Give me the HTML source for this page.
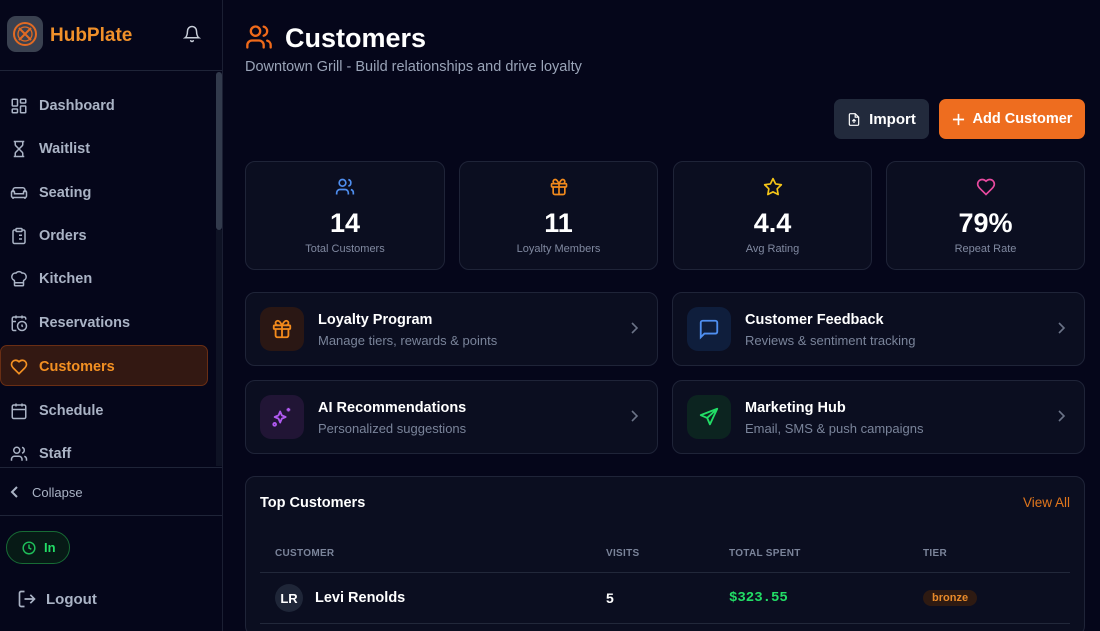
<!DOCTYPE html>
<html style="width:1100px;height:631px;overflow:hidden"><head><meta charset="utf-8"><style>
*{box-sizing:border-box;margin:0;padding:0}
body{width:1100px;height:631px;overflow:hidden;background:#05061a;font-family:"Liberation Sans",sans-serif;color:#fff;position:relative}
.sb{position:absolute;left:0;top:0;width:223px;height:631px;border-right:1px solid #1b1f33;background:#05061a}
.abs{position:absolute}
svg{display:block}
.nav{position:absolute;left:10px;display:flex;align-items:center;gap:11px;color:#aab3c5;font-size:14.5px;font-weight:bold}
.nav svg{width:18px;height:18px}
.card{position:absolute;background:#0b0e20;border:1px solid #1f2438;border-radius:10px}
.stat{text-align:center}
.stat .v{font-size:27px;font-weight:bold;position:absolute;left:0;right:0;top:46px}
.stat .l{font-size:11px;color:#8089a0;position:absolute;left:0;right:0;top:81px}
.stat svg{position:absolute;left:50%;margin-left:-10px;top:15px;width:20px;height:20px}
.lk .ib{position:absolute;left:14px;top:14px;width:44px;height:44px;border-radius:11px;display:flex;align-items:center;justify-content:center}
.lk .t{position:absolute;left:72px;top:19px;font-size:14.5px;font-weight:bold}
.lk .s{position:absolute;left:72px;top:40px;font-size:13px;color:#7a849a}
.lk .ch{position:absolute;right:18px;top:28px}
.th{position:absolute;top:71px;font-size:10px;font-weight:bold;color:#7b849a;letter-spacing:.3px}
</style></head><body>
<div class="sb">
 <div class="abs" style="left:7px;top:16px;width:36px;height:36px;border-radius:9px;background:#3a4150;display:flex;align-items:center;justify-content:center">
  <svg width="28" height="28" viewBox="0 0 28 28" fill="none" stroke="#e06a24" stroke-width="2"><circle cx="14" cy="14" r="11"/><circle cx="14" cy="14" r="7" stroke-width="1.3"/><path d="M8 8l12 12M20 8L8 20"/></svg>
 </div>
 <div class="abs" style="left:50px;top:25px;font-size:19px;font-weight:bold;color:#f0902a">HubPlate</div>
 <svg class="abs" style="left:183px;top:25px" width="18" height="18" viewBox="0 0 24 24" fill="none" stroke="#c8cdd8" stroke-width="2" stroke-linecap="round"><path d="M6 8a6 6 0 0112 0c0 7 3 9 3 9H3s3-2 3-9M10.3 21a1.9 1.9 0 003.4 0"/></svg>
 <div class="abs" style="left:0;top:70px;width:222px;border-top:1px solid #1f2438"></div>
 <div class="abs" style="left:216px;top:72px;width:6px;height:158px;border-radius:3px;background:#323a4c"></div>
 <div class="abs" style="left:216px;top:230px;width:6px;height:236px;background:#0e1224"></div>
 <div class="nav" style="top:97px"><svg viewBox="0 0 24 24" fill="none" stroke="#aab3c5" stroke-width="2"><rect x="3" y="3" width="7" height="9" rx="1"/><rect x="14" y="3" width="7" height="5" rx="1"/><rect x="14" y="12" width="7" height="9" rx="1"/><rect x="3" y="16" width="7" height="5" rx="1"/></svg>Dashboard</div>
 <div class="nav" style="top:140px"><svg viewBox="0 0 24 24" fill="none" stroke="#aab3c5" stroke-width="2"><path d="M5 22h14M5 2h14M17 22v-4.2a2 2 0 00-.6-1.4L12 12l-4.4 4.4a2 2 0 00-.6 1.4V22M7 2v4.2a2 2 0 00.6 1.4L12 12l4.4-4.4a2 2 0 00.6-1.4V2"/></svg>Waitlist</div>
 <div class="nav" style="top:184px"><svg viewBox="0 0 24 24" fill="none" stroke="#aab3c5" stroke-width="2"><path d="M4 11V8a3 3 0 013-3h10a3 3 0 013 3v3M2 16a2 2 0 002 2h16a2 2 0 002-2v-5a2 2 0 00-4 0v2H6v-2a2 2 0 00-4 0zM4 18v2M20 18v2"/></svg>Seating</div>
 <div class="nav" style="top:227px"><svg viewBox="0 0 24 24" fill="none" stroke="#aab3c5" stroke-width="2"><rect x="8" y="2" width="8" height="4" rx="1"/><path d="M16 4h2a2 2 0 012 2v14a2 2 0 01-2 2H6a2 2 0 01-2-2V6a2 2 0 012-2h2M12 11h4M12 16h4M8 11h.01M8 16h.01"/></svg>Orders</div>
 <div class="nav" style="top:270px"><svg viewBox="0 0 24 24" fill="none" stroke="#aab3c5" stroke-width="2"><path d="M17 21a1 1 0 001-1v-5.35c0-.46.3-.86.7-1.05a5 5 0 00-2.7-9.5 5 5 0 00-8 0 5 5 0 00-2.7 9.5c.4.2.7.6.7 1.05V20a1 1 0 001 1zM6 17h12"/></svg>Kitchen</div>
 <div class="nav" style="top:314px"><svg viewBox="0 0 24 24" fill="none" stroke="#aab3c5" stroke-width="2"><path d="M21 7.5V6a2 2 0 00-2-2H5a2 2 0 00-2 2v14a2 2 0 002 2h3.5M16 2v4M8 2v4M3 10h5"/><circle cx="16" cy="16" r="6"/><path d="M16 14v2l1 1"/></svg>Reservations</div>
 <div class="abs" style="left:0;top:345px;width:208px;height:41px;border-radius:7px;background:#331812;border:1px solid #6a2e14"></div>
 <div class="nav" style="top:358px;color:#f39022"><svg viewBox="0 0 24 24" fill="none" stroke="#f39022" stroke-width="2.2"><path d="M19 14c1.5-1.5 3-3.2 3-5.5A5.5 5.5 0 0016.5 3c-1.8 0-3 .5-4.5 2-1.5-1.5-2.7-2-4.5-2A5.5 5.5 0 002 8.5c0 2.3 1.5 4 3 5.5l7 7z"/></svg>Customers</div>
 <div class="nav" style="top:402px"><svg viewBox="0 0 24 24" fill="none" stroke="#aab3c5" stroke-width="2"><rect x="3" y="4" width="18" height="18" rx="2"/><path d="M16 2v4M8 2v4M3 10h18"/></svg>Schedule</div>
 <div class="nav" style="top:445px"><svg viewBox="0 0 24 24" fill="none" stroke="#aab3c5" stroke-width="2"><path d="M16 21v-2a4 4 0 00-4-4H6a4 4 0 00-4 4v2"/><circle cx="9" cy="7" r="4"/><path d="M22 21v-2a4 4 0 00-3-3.87M16 3.13a4 4 0 010 7.75"/></svg>Staff</div>
 <div class="abs" style="left:0;top:467px;width:222px;border-top:1px solid #1f2438;height:49px;border-bottom:1px solid #1f2438;background:#05061a"></div>
 <svg class="abs" style="left:9px;top:485px" width="12" height="14" viewBox="0 0 12 14" fill="none" stroke="#aab3c5" stroke-width="2"><path d="M8 2L3 7l5 5"/></svg>
 <div class="abs" style="left:32px;top:485px;font-size:13px;color:#aab3c5">Collapse</div>
 <div class="abs" style="left:6px;top:531px;width:64px;height:33px;border-radius:17px;background:#071a16;border:1.5px solid #176b35;display:flex;align-items:center;padding-left:15px;gap:8px;font-size:13px;font-weight:bold;color:#22dd66">
  <svg width="14" height="14" viewBox="0 0 24 24" fill="none" stroke="#1fbf5a" stroke-width="2.5"><circle cx="12" cy="12" r="10"/><path d="M12 6v6l4 2"/></svg>In</div>
 <svg class="abs" style="left:17px;top:589px" width="20" height="20" viewBox="0 0 24 24" fill="none" stroke="#aab3c5" stroke-width="2"><path d="M9 21H5a2 2 0 01-2-2V5a2 2 0 012-2h4M16 17l5-5-5-5M21 12H9"/></svg>
 <div class="abs" style="left:46px;top:591px;font-size:15px;font-weight:bold;color:#aab3c5">Logout</div>
</div>

<svg class="abs" style="left:245px;top:23px" width="28" height="28" viewBox="0 0 24 24" fill="none" stroke="#f06a1a" stroke-width="2" stroke-linecap="round"><path d="M16 21v-2a4 4 0 00-4-4H6a4 4 0 00-4 4v2"/><circle cx="9" cy="7" r="4"/><path d="M22 21v-2a4 4 0 00-3-3.87M16 3.13a4 4 0 010 7.75"/></svg>
<div class="abs" style="left:285px;top:23px;font-size:27px;font-weight:bold">Customers</div>
<div class="abs" style="left:245px;top:59px;font-size:14.5px;color:#9aa4b8">Downtown Grill - Build relationships and drive loyalty</div>

<div class="abs" style="left:834px;top:99px;width:95px;height:40px;border-radius:7px;background:#222a3c;display:flex;align-items:center;justify-content:center;gap:8px;font-size:15px;font-weight:bold">
 <svg width="14" height="15" viewBox="0 0 24 24" fill="none" stroke="#fff" stroke-width="2"><path d="M14 2H6a2 2 0 00-2 2v16a2 2 0 002 2h12a2 2 0 002-2V8zM14 2v6h6M12 18v-6M9 15l3-3 3 3"/></svg>Import</div>
<div class="abs" style="left:939px;top:99px;width:146px;height:40px;border-radius:7px;background:#ee6d1f;display:flex;align-items:center;justify-content:center;gap:8px;font-size:14.5px;font-weight:bold">
 <svg width="13" height="13" viewBox="0 0 14 14" fill="none" stroke="#fff" stroke-width="1.8"><path d="M7 1v12M1 7h12"/></svg>Add Customer</div>

<div class="card stat" style="left:245px;top:161px;width:200px;height:109px"><svg viewBox="0 0 24 24" fill="none" stroke="#4f8ff0" stroke-width="2"><path d="M16 21v-2a4 4 0 00-4-4H6a4 4 0 00-4 4v2"/><circle cx="9" cy="7" r="4"/><path d="M22 21v-2a4 4 0 00-3-3.87M16 3.13a4 4 0 010 7.75"/></svg><div class="v">14</div><div class="l">Total Customers</div></div>
<div class="card stat" style="left:459px;top:161px;width:199px;height:109px"><svg viewBox="0 0 24 24" fill="none" stroke="#f28a1c" stroke-width="2"><rect x="3" y="8" width="18" height="4" rx="1"/><path d="M12 8v13M19 12v7a2 2 0 01-2 2H7a2 2 0 01-2-2v-7M7.5 8a2.5 2.5 0 010-5C9.5 3 12 8 12 8s2.5-5 4.5-5a2.5 2.5 0 010 5"/></svg><div class="v">11</div><div class="l">Loyalty Members</div></div>
<div class="card stat" style="left:673px;top:161px;width:199px;height:109px"><svg viewBox="0 0 24 24" fill="none" stroke="#f5c518" stroke-width="2" stroke-linejoin="round"><path d="M12 2l3.1 6.3 6.9 1-5 4.9 1.2 6.8L12 17.8 5.8 21l1.2-6.8-5-4.9 6.9-1z"/></svg><div class="v">4.4</div><div class="l">Avg Rating</div></div>
<div class="card stat" style="left:886px;top:161px;width:199px;height:109px"><svg viewBox="0 0 24 24" fill="none" stroke="#e94aa0" stroke-width="2"><path d="M19 14c1.5-1.5 3-3.2 3-5.5A5.5 5.5 0 0016.5 3c-1.8 0-3 .5-4.5 2-1.5-1.5-2.7-2-4.5-2A5.5 5.5 0 002 8.5c0 2.3 1.5 4 3 5.5l7 7z"/></svg><div class="v">79%</div><div class="l">Repeat Rate</div></div>

<div class="card lk" style="left:245px;top:292px;width:413px;height:74px"><div class="ib" style="background:#2a1714"><svg width="22" height="22" viewBox="0 0 24 24" fill="none" stroke="#f28a1c" stroke-width="2"><rect x="3" y="8" width="18" height="4" rx="1"/><path d="M12 8v13M19 12v7a2 2 0 01-2 2H7a2 2 0 01-2-2v-7M7.5 8a2.5 2.5 0 010-5C9.5 3 12 8 12 8s2.5-5 4.5-5a2.5 2.5 0 010 5"/></svg></div><div class="t">Loyalty Program</div><div class="s">Manage tiers, rewards &amp; points</div><svg class="ch" width="10" height="14" viewBox="0 0 10 14" fill="none" stroke="#6b7387" stroke-width="1.6"><path d="M3 2l5 5-5 5"/></svg></div>
<div class="card lk" style="left:672px;top:292px;width:413px;height:74px"><div class="ib" style="background:#0f1e3c"><svg width="22" height="22" viewBox="0 0 24 24" fill="none" stroke="#4f8ff0" stroke-width="2"><path d="M21 15a2 2 0 01-2 2H7l-4 4V5a2 2 0 012-2h14a2 2 0 012 2z"/></svg></div><div class="t">Customer Feedback</div><div class="s">Reviews &amp; sentiment tracking</div><svg class="ch" width="10" height="14" viewBox="0 0 10 14" fill="none" stroke="#6b7387" stroke-width="1.6"><path d="M3 2l5 5-5 5"/></svg></div>
<div class="card lk" style="left:245px;top:380px;width:413px;height:74px"><div class="ib" style="background:#211535"><svg width="22" height="22" viewBox="0 0 24 24" fill="none" stroke="#b05af0" stroke-width="2" stroke-linejoin="round"><path d="M10 6l1.8 4.2L16 12l-4.2 1.8L10 18l-1.8-4.2L4 12l4.2-1.8z"/><path d="M19 2v4M17 4h4"/><circle cx="4" cy="20" r="1.5"/></svg></div><div class="t">AI Recommendations</div><div class="s">Personalized suggestions</div><svg class="ch" width="10" height="14" viewBox="0 0 10 14" fill="none" stroke="#6b7387" stroke-width="1.6"><path d="M3 2l5 5-5 5"/></svg></div>
<div class="card lk" style="left:672px;top:380px;width:413px;height:74px"><div class="ib" style="background:#0c2420"><svg width="22" height="22" viewBox="0 0 24 24" fill="none" stroke="#22dd66" stroke-width="2" stroke-linejoin="round"><path d="M21 3L3 10l7 3 3 7z M21 3L10 13"/></svg></div><div class="t">Marketing Hub</div><div class="s">Email, SMS &amp; push campaigns</div><svg class="ch" width="10" height="14" viewBox="0 0 10 14" fill="none" stroke="#6b7387" stroke-width="1.6"><path d="M3 2l5 5-5 5"/></svg></div>

<div class="card" style="left:245px;top:476px;width:840px;height:160px">
 <div class="abs" style="left:14px;top:18px;font-size:14.5px;font-weight:bold">Top Customers</div>
 <div class="abs" style="right:14px;top:18px;font-size:13.5px;color:#e0761c">View All</div>
 <div class="th" style="left:29px">CUSTOMER</div>
 <div class="th" style="left:360px">VISITS</div>
 <div class="th" style="left:483px">TOTAL SPENT</div>
 <div class="th" style="left:677px">TIER</div>
 <div class="abs" style="left:14px;right:14px;top:95px;border-top:1px solid #22283a"></div>
 <div class="abs" style="left:29px;top:107px;width:28px;height:28px;border-radius:50%;background:#1f2638;font-size:13px;font-weight:bold;display:flex;align-items:center;justify-content:center">LR</div>
 <div class="abs" style="left:69px;top:113px;font-size:14.5px;font-weight:bold">Levi Renolds</div>
 <div class="abs" style="left:360px;top:113px;font-size:14px;font-weight:bold">5</div>
 <div class="abs" style="left:483px;top:113px;font-size:14px;font-weight:bold;color:#22dd66;font-family:'Liberation Mono',monospace">$323.55</div>
 <div class="abs" style="left:677px;top:113px;padding:2px 9px;border-radius:9px;background:#2e1a12;color:#e88a2a;font-size:11px;font-weight:bold">bronze</div>
 <div class="abs" style="left:14px;right:14px;top:146px;border-top:1px solid #22283a"></div>
</div>
</body></html>
